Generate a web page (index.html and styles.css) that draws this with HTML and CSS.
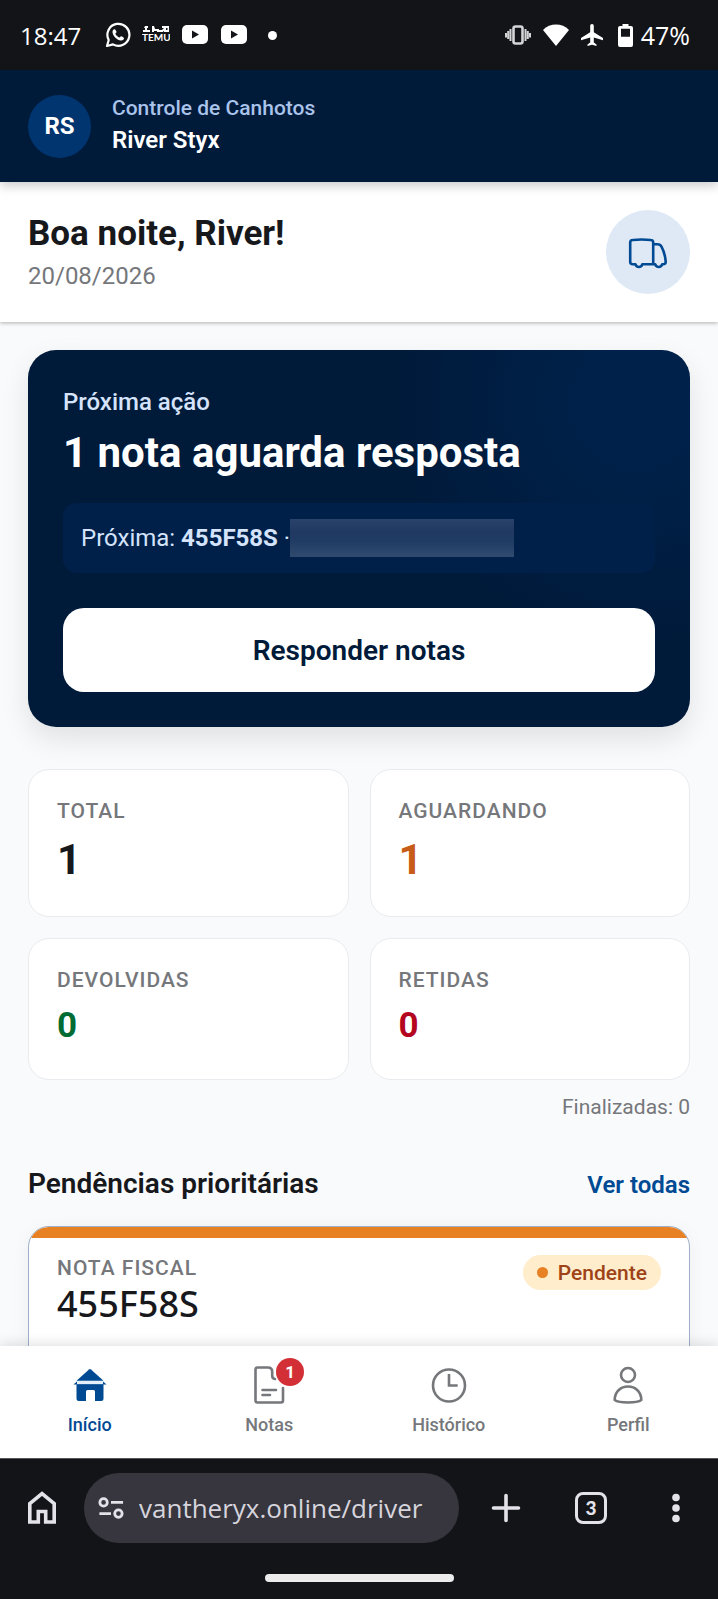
FILE: index.html
```html
<!DOCTYPE html>
<html lang="pt-BR">
<head>
    <meta charset="UTF-8">
    <meta name="viewport" content="width=device-width, initial-scale=1.0">
    <title>Controle de Canhotos</title>
    <link rel="stylesheet" href="styles.css">
</head>
<body>
    <div class="status-bar">
        <span class="clock">18:47</span>
        <div class="status-icons">
            <svg width="26" height="26" viewBox="0 0 26 26" fill="none">
                <path d="M2 24l1.7-6A11 11 0 1 1 8 22.400z" stroke="#fff" stroke-width="2.200" stroke-linejoin="round"/>
                <path d="M9.300 7.200c-1 .2-2 1.400-1.800 3 .5 4 4.500 8 8.500 8.300 1.600.1 2.900-.8 3-2.200.1-.8-2.300-2.200-3-2.100-.6.1-1 1.400-1.600 1.300-1.500-.4-3.500-2.300-4-3.800-.1-.6 1.100-1 1.100-1.700 0-.6-1-2.900-2.200-2.800z" fill="#fff"/>
            </svg>
            <svg width="28" height="20" viewBox="0 0 28 20" fill="#fff">
                <path d="M3 1h3v2H5v2h3v2H1V5h2V3H2zM10 1h2l1 3h4v3h-2V6h-3v1h-2zM17 5h3l2-2h-2V1h4L21 7h-4zM23 1h4v6h-5V4h1zm1 2v2h1.500V3z"/>
                <text x="0" y="16" class="tiny-logo">TEMU</text>
            </svg>
            <svg width="28" height="20" viewBox="0 0 28 20">
                <rect x="1" y="0" width="26" height="19" rx="5" fill="#fff"/>
                <path d="M11 5.500l7 4-7 4z" fill="#131418"/>
            </svg>
            <svg width="28" height="20" viewBox="0 0 28 20">
                <rect x="1" y="0" width="26" height="19" rx="5" fill="#fff"/>
                <path d="M11 5.500l7 4-7 4z" fill="#131418"/>
            </svg>
            <span class="more-dot"></span>
        </div>
        <div class="status-icons status-right">
            <svg width="26" height="20" viewBox="0 0 26 20" fill="none" stroke="#d5d5d8">
                <rect x="8.500" y="1.500" width="9" height="17" rx="2" stroke-width="2.600"/>
                <path d="M5.500 4v12M20.500 4v12M3.200 6v8M22.800 6v8M1 8v4.500M25 8v4.500" stroke-width="2"/>
            </svg>
            <svg width="26" height="22" viewBox="0 0 26 22"><path d="M0 6C7-1.300 19-1.300 26 6L13 22z" fill="#fff"/></svg>
            <svg width="22" height="23" viewBox="0 0 22 23"><path d="M11 0c1.200 0 1.800.9 1.800 2v6.300L22 14v2.200l-9.200-2.800v5l2.700 2V22L11 20.800 6.500 22v-1.600l2.700-2v-5L0 16.200V14l9.200-5.700V2c0-1.100.6-2 1.800-2z" fill="#fff"/></svg>
            <svg class="battery" width="15" height="23" viewBox="0 0 15 23"><path fill-rule="evenodd" d="M4.500 0h6v2H13a2 2 0 0 1 2 2v17a2 2 0 0 1-2 2H2a2 2 0 0 1-2-2V4a2 2 0 0 1 2-2h2.500zM3 4.700v8h9v-8z" fill="#fff"/></svg>
        </div>
        <span class="battery-level">47%</span>
    </div>

    <header class="app-header">
        <div class="avatar">RS</div>
        <div class="user">
            <p class="app-name">Controle de Canhotos</p>
            <p class="user-name">River Styx</p>
        </div>
    </header>

    <main>
        <section class="greeting">
            <div>
                <h1>Boa noite, River!</h1>
                <p class="date">20/08/2026</p>
            </div>
            <div class="truck">
                <svg width="42" height="42" viewBox="0 0 42 42" fill="none" stroke="#004a94" stroke-width="2.600" stroke-linejoin="round" stroke-linecap="round">
                    <path d="M26.200 33.200V11.500c0-1.700-.8-2.500-2.500-2.500-6-.6-12-.6-18 0C4 9 3.200 9.800 3.200 11.500v19.200c0 1.700.8 2.500 2.500 2.500h2.800c.4 1.700 1.700 2.800 3.400 2.800s3-1.100 3.400-2.800h12.900c.5 1.700 1.800 2.800 3.500 2.800s3-1.100 3.500-2.800h1c1.600 0 2.500-.8 2.500-2.500-.4-5.500-1.800-10.500-4.200-15-.9-1.700-2-2.400-3.800-2.400h-4.500"/>
                </svg>
            </div>
        </section>

        <div class="content">
            <section class="next-action">
                <p class="next-label">Próxima ação</p>
                <h2>1 nota aguarda resposta</h2>
                <div class="next-note">
                    <span>Próxima: <strong>455F58S</strong> ·</span>
                    <span class="hidden-name"></span>
                </div>
                <button type="button" class="answer">Responder notas</button>
            </section>

            <section class="stats">
                <div class="stat big">
                    <p class="label">TOTAL</p>
                    <p class="value">1</p>
                </div>
                <div class="stat big waiting">
                    <p class="label">AGUARDANDO</p>
                    <p class="value">1</p>
                </div>
                <div class="stat returned">
                    <p class="label">DEVOLVIDAS</p>
                    <p class="value">0</p>
                </div>
                <div class="stat kept">
                    <p class="label">RETIDAS</p>
                    <p class="value">0</p>
                </div>
            </section>
            <p class="finished">Finalizadas: 0</p>

            <div class="section-title">
                <h3>Pendências prioritárias</h3>
                <a href="#">Ver todas</a>
            </div>

            <article class="note-card">
                <div class="note-top">
                    <div>
                        <p class="label">NOTA FISCAL</p>
                        <p class="note-number">455F58S</p>
                    </div>
                    <span class="pill">Pendente</span>
                </div>
            </article>
        </div>
    </main>

    <nav class="bottom-nav">
        <a href="#" class="active">
            <svg width="42" height="42" viewBox="0 0 42 42" fill="#004a94">
                <path d="M20 5.400q1-.8 2 0L34.500 16.800h-27z"/>
                <path d="M4.500 20.500l4-3.500h25l4 3.500z"/>
                <path d="M8 17h26v3.200H8z" fill="#e3f0fc"/>
                <path d="M7.500 20.300H34.500V34.500q0 2.500-2.500 2.500h-6V27.500q0-1.500-1.500-1.500h-6q-1.500 0-1.500 1.500V37h-7q-2.500 0-2.500-2.500z"/>
            </svg>
            <span>Início</span>
        </a>
        <a href="#">
            <span class="icon-wrap">
                <svg width="42" height="42" viewBox="0 0 42 42" fill="none" stroke="#75777b" stroke-width="2.600" stroke-linejoin="round" stroke-linecap="round">
                    <path d="M35 24v12.500a2 2 0 0 1-2 2H9.500a2 2 0 0 1-2-2v-31a2 2 0 0 1 2-2H20c3 0 4.200 1.300 4.200 4.200v3.800q0 3.200 2.800 3.500M14.500 26h13.500M14.500 31h7.500"/>
                </svg>
                <span class="badge">1</span>
            </span>
            <span>Notas</span>
        </a>
        <a href="#">
            <svg width="42" height="42" viewBox="0 0 42 42" fill="none" stroke="#75777b" stroke-width="2.600">
                <circle cx="21" cy="21.500" r="16"/>
                <path d="M21 10V21.500h8.700"/>
            </svg>
            <span>Histórico</span>
        </a>
        <a href="#">
            <svg width="42" height="42" viewBox="0 0 42 42" fill="none" stroke="#75777b" stroke-width="2.600" stroke-linejoin="round">
                <circle cx="21" cy="11" r="7"/>
                <path d="M7.700 36C7.700 28 13.500 22.500 21 22.500S34.300 28 34.300 36C30 39.300 12 39.300 7.700 36z"/>
            </svg>
            <span>Perfil</span>
        </a>
    </nav>

    <footer class="browser-bar">
        <div class="browser-tools">
            <button type="button" class="tool" aria-label="Home">
                <svg width="42" height="42" viewBox="0 0 42 42" fill="none" stroke="#e4e2e9" stroke-width="3.600"><path d="M8.800 35V16.500L21 6.500l12.200 10V35h-8.500V24.500h-7.400V35z"/></svg>
            </button>
            <div class="address">
                <svg width="26" height="24" viewBox="0 0 28 24" fill="none" stroke="#e4e2e9" stroke-width="3">
                    <circle cx="6" cy="6" r="4"/><circle cx="22" cy="18" r="4"/><path d="M14 6h13M1.500 18H14"/>
                </svg>
                <input type="text" value="vantheryx.online/driver" aria-label="URL">
            </div>
            <div class="right-tools">
                <button type="button" class="tool" aria-label="New tab">
                    <svg width="42" height="42" viewBox="0 0 42 42" stroke="#e4e2e9" stroke-width="3.600" stroke-linecap="round"><path d="M21 8.500v25M8.500 21h25"/></svg>
                </button>
                <button type="button" class="tool"><span class="tab-count">3</span></button>
                <button type="button" class="tool" aria-label="Menu">
                    <svg width="42" height="42" viewBox="0 0 42 42" fill="#e4e2e9"><circle cx="21" cy="10.500" r="3.800"/><circle cx="21" cy="21" r="3.800"/><circle cx="21" cy="31.500" r="3.800"/></svg>
                </button>
            </div>
        </div>
        <div class="handle"></div>
    </footer>
</body>
</html>
```

FILE: styles.css
```css
* {
    box-sizing: border-box;
}

body {
    margin: 0;
    height: 100vh;
    display: flex;
    flex-direction: column;
    overflow: hidden;
    font-family: Roboto, Arial, sans-serif;
    background-color: #f9fafc;
    color: #17181c;
}

h1, h2, h3, p {
    margin: 0;
}

svg {
    display: block;
    flex-shrink: 0;
}

a {
    text-decoration: none;
}

button {
    border: none;
    padding: 0;
    background: none;
    font-family: inherit;
    cursor: pointer;
}

/* Phone status bar */
.status-bar {
    display: flex;
    align-items: center;
    flex-shrink: 0;
    height: 70px;
    padding: 0 28px 0 20px;
    background-color: #131418;
    color: #fff;
    font-family: "Open Sans", sans-serif;
}

.clock {
    font-size: 24px;
}

.battery-level {
    font-size: 25px;
    line-height: 32px;
}

.status-icons {
    display: flex;
    align-items: center;
    gap: 11px;
    margin-left: 24px;
}

.status-right {
    gap: 12px;
    margin: 0 8px 0 auto;
}

.battery {
    margin-left: 3px;
}

.tiny-logo {
    font-family: Lato, sans-serif;
    font-size: 10px;
    font-weight: 700;
}

.more-dot {
    width: 9px;
    height: 9px;
    margin-left: 9px;
    border-radius: 50%;
    background-color: #fff;
}

/* App header */
.app-header {
    display: flex;
    align-items: center;
    gap: 21px;
    flex-shrink: 0;
    height: 112px;
    padding: 0 28px;
    background-color: #001a3a;
    box-shadow: 0 4px 10px rgba(0, 0, 0, 0.2);
    z-index: 2;
}

.avatar {
    width: 63px;
    height: 63px;
    border-radius: 50%;
    background-color: #003570;
    color: #fff;
    font-size: 24px;
    font-weight: 700;
    line-height: 63px;
    text-align: center;
}

.user {
    padding-bottom: 4px;
}

.app-name {
    font-size: 21px;
    font-weight: 500;
    line-height: 32px;
    color: #a9c3ea;
}

.user-name {
    font-size: 24px;
    font-weight: 600;
    line-height: 32px;
    color: #fff;
}

main {
    flex: 1;
    min-height: 0;
    overflow: hidden;
}

.greeting {
    display: flex;
    justify-content: space-between;
    align-items: center;
    padding: 28px;
    background-color: #fff;
    box-shadow: 0 1px 4px rgba(0, 0, 0, 0.3);
}

h1 {
    font-size: 35px;
    font-weight: 700;
    line-height: 48px;
}

.date {
    font-size: 24px;
    line-height: 36px;
    color: #75777b;
}

.truck {
    display: flex;
    align-items: center;
    justify-content: center;
    width: 84px;
    height: 84px;
    border-radius: 50%;
    background-color: #dfe9f6;
}

.content {
    padding: 28px 28px 0;
}

/* Next action card */
.next-action {
    padding: 35px;
    border-radius: 28px;
    background: radial-gradient(circle at 92% 14%, #002149 0, #002149 60px, #001a3a 240px);
    box-shadow: 0 12px 28px rgba(0, 0, 0, 0.1);
    color: #d5e3fb;
}

.next-label {
    font-size: 24px;
    font-weight: 500;
    line-height: 35px;
}

h2 {
    margin-top: 7px;
    font-size: 42px;
    font-weight: 700;
    line-height: 52px;
    color: #fff;
}

.next-note {
    display: flex;
    align-items: center;
    height: 70px;
    margin-top: 24px;
    padding: 0 18px;
    border-radius: 14px;
    background-color: #00204a;
    font-size: 24px;
}

.hidden-name {
    width: 224px;
    height: 38px;
    background: linear-gradient(#28426a, #1f3962 35%, #213c64 60%, #304a6f);
}

.answer {
    display: block;
    width: 100%;
    height: 84px;
    margin-top: 35px;
    border-radius: 21px;
    background-color: #fff;
    color: #001a3a;
    font-size: 28px;
    font-weight: 600;
}

/* Totals */
.stats {
    display: grid;
    grid-template-columns: 1fr 1fr;
    gap: 21px;
    margin-top: 42px;
}

.stat {
    padding: 28px;
    border: 1px solid #e9ebee;
    border-radius: 21px;
    background-color: #fff;
}

.label {
    font-size: 21px;
    font-weight: 500;
    line-height: 26px;
    letter-spacing: 1px;
    color: #75777b;
}

.value {
    margin-top: 8px;
    font-size: 35px;
    font-weight: 700;
    line-height: 50px;
}

.big .value {
    font-size: 42px;
    line-height: 56px;
}

.waiting .value {
    color: #c75b18;
}

.returned .value {
    color: #006b33;
}

.kept .value {
    color: #b5061f;
}

.finished {
    margin-top: 14px;
    font-size: 21px;
    line-height: 26px;
    text-align: right;
    color: #75777b;
}

.section-title {
    display: flex;
    justify-content: space-between;
    align-items: baseline;
    margin: 42px 0 19px;
    line-height: 44px;
}

h3 {
    font-size: 28px;
    font-weight: 600;
}

.section-title a {
    font-size: 24px;
    font-weight: 600;
    color: #004a94;
}

.note-card {
    border: 1px solid #9fb0c9;
    border-radius: 21px;
    background-color: #fff;
    overflow: hidden;
    box-shadow: 0 3px 18px rgba(0, 0, 0, 0.05);
}

.note-top {
    display: flex;
    justify-content: space-between;
    align-items: flex-start;
    padding: 17px 28px 42px;
    border-top: 11px solid #e88024;
}

.note-number {
    font-family: "Noto Sans", sans-serif;
    font-size: 36px;
    font-weight: 500;
    line-height: 46px;
}

.pill {
    display: flex;
    align-items: center;
    height: 35px;
    padding: 0 14px;
    border-radius: 18px;
    background-color: #ffedcc;
    color: #9e4318;
    font-size: 21px;
    font-weight: 500;
}

.pill::before {
    content: "";
    width: 11px;
    height: 11px;
    margin-right: 10px;
    border-radius: 50%;
    background-color: #e88024;
}

/* Bottom navigation */
.bottom-nav {
    display: flex;
    flex-shrink: 0;
    height: 112px;
    padding-top: 18px;
    background-color: #fff;
    box-shadow: 0 -2px 12px rgba(0, 0, 0, 0.12);
    z-index: 2;
}

.bottom-nav a {
    display: flex;
    flex: 1;
    flex-direction: column;
    align-items: center;
    gap: 5px;
    color: #75777b;
    font-size: 18px;
    font-weight: 500;
    line-height: 28px;
}

.bottom-nav .active {
    color: #004a94;
}

.icon-wrap {
    position: relative;
}

.badge {
    position: absolute;
    top: -6px;
    right: -14px;
    width: 28px;
    height: 28px;
    border-radius: 50%;
    background-color: #d32f36;
    color: #fff;
    font-size: 17px;
    font-weight: 700;
    text-align: center;
}

/* Browser toolbar */
.browser-bar {
    flex-shrink: 0;
    height: 141px;
    padding: 14px 21px 0;
    border-top: 1px solid #55565a;
    background-color: #131418;
    z-index: 3;
}

.browser-tools {
    display: flex;
    align-items: center;
}

.tool {
    display: flex;
    align-items: center;
    justify-content: center;
    width: 42px;
    height: 42px;
}

.address {
    display: flex;
    flex: 1;
    align-items: center;
    gap: 15px;
    min-width: 0;
    height: 70px;
    margin: 0 26px 0 21px;
    padding: 0 14px;
    border-radius: 35px;
    background-color: #37363e;
}

.address input {
    flex: 1;
    min-width: 0;
    padding: 0;
    border: none;
    outline: none;
    background: none;
    color: #d6d4dc;
    font-family: "Open Sans", sans-serif;
    font-size: 26px;
}

.right-tools {
    display: flex;
    gap: 43px;
}

.tab-count {
    width: 32px;
    height: 32px;
    border: 3px solid #e4e2e9;
    border-radius: 8px;
    color: #e4e2e9;
    font-family: Lato, sans-serif;
    font-size: 19px;
    font-weight: 900;
    line-height: 26px;
}

.handle {
    width: 189px;
    height: 8px;
    margin: 31px auto 0;
    border-radius: 4px;
    background-color: #ececec;
}
```
